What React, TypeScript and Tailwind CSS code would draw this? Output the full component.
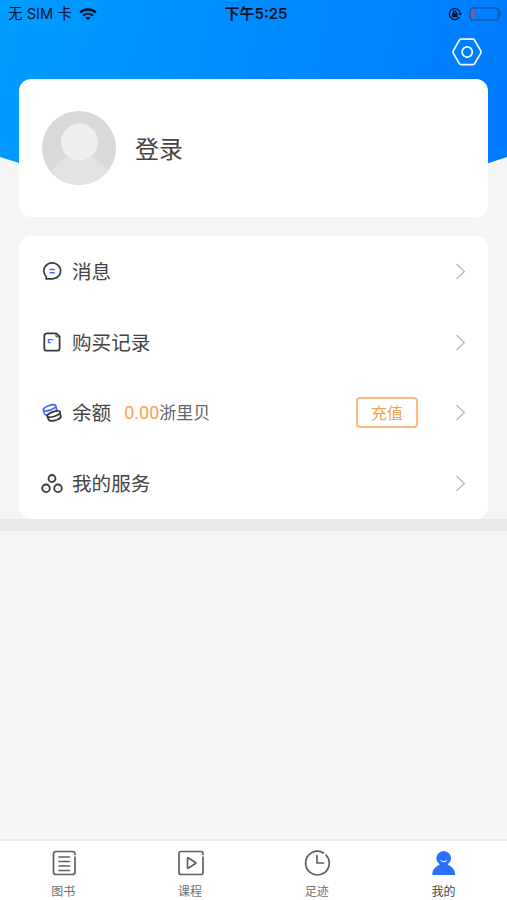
import type { ReactNode } from "react";

function Wifi() {
  return (
    <svg width="18" height="13" viewBox="0 0 18 13" fill="none" stroke="#04152b">
      <path d="M1.2 4.4C5.600.5 12.400.5 16.800 4.400" strokeWidth="2.500" />
      <path d="M4 7.700c2.900-2.600 7.100-2.600 10 0" strokeWidth="2.200" />
      <path d="M9 12.600 6.200 9.800c1.600-1.400 4-1.400 5.600 0z" fill="#04152b" stroke="none" />
    </svg>
  );
}

function RotationLock() {
  return (
    <svg width="15" height="14" viewBox="0 0 15 14" fill="none" stroke="#04152b">
      <path d="M11.500 10A5.500 5.500 0 1 1 12.100 5.500" strokeWidth="1.200" />
      <path d="M10.200 6h4l-1.900 2.700z" fill="#04152b" stroke="none" />
      <rect x="4" y="6.200" width="5.600" height="4" rx=".4" fill="#04152b" stroke="none" />
      <path d="M5.400 6.400V5.200a1.400 1.400 0 0 1 2.800 0v1.200" strokeWidth="1.200" />
    </svg>
  );
}

function Battery() {
  return (
    <svg width="33" height="15" viewBox="0 0 33 15" fill="none">
      <rect x="1" y="1" width="28.500" height="12" rx="3" stroke="#145ba6" strokeWidth="1.400" />
      <rect x="2.400" y="2.500" width="3" height="9" rx="1" fill="#8d5a8e" />
      <path d="M30.500 4.500c2.300 1 2.300 4.500 0 5.500z" fill="#145ba6" />
    </svg>
  );
}

function Settings() {
  return (
    <svg width="30" height="28" viewBox="0 0 30 28" fill="none" stroke="#fff" strokeWidth="1.700">
      <path d="M9.200 1.200h11.600q1.200 0 1.800 1l6 10.400q.7 1.400 0 2.800l-6 10.200q-.6 1-1.800 1H9.200q-1.200 0-1.800-1l-6-10.200q-.7-1.400 0-2.800l6-10.400q.6-1 1.800-1z" strokeLinejoin="round" />
      <circle cx="15.200" cy="14" r="5.100" />
    </svg>
  );
}

function Avatar() {
  return (
    <svg className="size-[74px] rounded-full bg-[#d9d9d9]" viewBox="0 0 74 74">
      <path d="M8 62C16 52 18 48 27 46h21c7 2 12 6 19 15L58 74H18z" fill="#e2e2e2" />
      <circle cx="37.500" cy="31" r="18.500" fill="#efefef" />
    </svg>
  );
}

function MessageIcon() {
  return (
    <svg width="20" height="20" viewBox="0 0 20 20" fill="none" strokeLinecap="round">
      <path d="M4.200 17.900V15.500A8.400 8 0 1 1 10.500 17.900z" stroke="#3b3b40" strokeWidth="1.700" strokeLinejoin="round" />
      <path d="M8.200 8.500h4M8.200 11.700h4" stroke="#4468f5" strokeWidth="1.500" />
    </svg>
  );
}

function RecordIcon() {
  return (
    <svg width="20" height="20" viewBox="0 0 20 20" fill="none">
      <path d="M14.300 1.400H5Q2.300 1.400 2.300 4v12.200q0 2.500 2.700 2.500h10q2.600 0 2.600-2.500V4.500z" stroke="#3b3b40" strokeWidth="1.800" strokeLinejoin="round" />
      <path d="M14 2v2.800h3" stroke="#3b3b40" />
      <path d="M5.800 7.600h5.400M5.800 10.700h3M6.400 7v4.300" stroke="#4468f5" strokeWidth="1.300" />
    </svg>
  );
}

function CoinsIcon() {
  return (
    <svg width="20" height="20" viewBox="0 0 20 20" fill="none" strokeLinejoin="round" strokeWidth="1.700">
      <path d="M1.700 5.500C3.500 3.500 9.500 1.300 12.500 1.800c1.500.3 1.600 1.600.5 2.700C11 6.500 5.300 8.500 2.700 7.900 1.300 7.500.9 6.500 1.700 5.500zM1.300 7l1.300 4c.5 1.100 1.700 1.400 3 1.300M13.800 3.500l1 3.700" stroke="#4468f5" />
      <path d="M5.500 11.800c2-2.100 8.300-4.400 11.400-3.800 1.600.4 1.600 1.700.4 2.900-2.200 2-8.100 3.900-10.700 3.200-1.400-.4-1.900-1.300-1.100-2.300zM5.200 13l1.300 3.500c1.200 2 5.100 1.500 8.500.3 3-1.200 4.200-2.300 3.800-3.900L17.800 9.500" stroke="#34343d" />
    </svg>
  );
}

function ServiceIcon() {
  return (
    <svg width="22" height="20" viewBox="0 0 22 20" fill="none" stroke="#3b3b40" strokeWidth="1.800">
      <circle cx="11" cy="4.500" r="3.500" />
      <circle cx="5" cy="14.300" r="3.800" />
      <circle cx="17" cy="14.300" r="3.800" />
      <path d="M10.400 4.500h1.200M4.400 14.300h1.200M16.400 14.300h1.200" stroke="#aab3dc" strokeWidth="1" />
    </svg>
  );
}

function Row({ icon, label, children }: { icon: ReactNode; label: string; children?: ReactNode }) {
  return (
    <div className="flex items-center pr-[22px] pl-[21px]">
      <span className="flex w-6 shrink-0 justify-center">{icon}</span>
      <span className="ml-2 pt-px text-[19.6px] leading-7">{label}</span>
      <div className="flex flex-1 items-center">{children}</div>
      <svg width="11" height="17" viewBox="0 0 11 17" fill="none" stroke="#b9bcc8" strokeWidth="1.400">
        <path d="m1.500 1 7.800 7.500L1.500 16" />
      </svg>
    </div>
  );
}

function Tab({ label, active, children }: { label: string; active?: boolean; children: ReactNode }) {
  return (
    <div className={`flex flex-col items-center pt-2 text-xs leading-4 ${active ? "text-[#3f3f3f]" : "text-[#707070]"}`}>
      <svg className="ml-px" width="28" height="28" viewBox="0 0 28 28" fill="none" stroke="#606060" strokeWidth="1.700" strokeLinecap="round" strokeLinejoin="round">
        {children}
      </svg>
      <span className="mt-[7px]">{label}</span>
    </div>
  );
}

export default function App() {
  return (
    <div className="relative isolate flex h-[900px] w-full flex-col overflow-hidden bg-[#f5f5f5] font-['Inter','Noto_Sans_CJK_SC',sans-serif] text-[#444]">
      <div className="absolute inset-x-0 top-0 -z-10 h-[170px] bg-linear-[105deg] from-[#009dff] to-[#007aff] [clip-path:polygon(0_0,100%_0,100%_157px,96.4%_163px,90%_170px,10%_170px,3.8%_163px,0_157px)]" />

      <header className="h-[79px] shrink-0 text-[#04152b]">
        <div className="grid h-7 grid-cols-3 items-center pr-[5px] pl-[8px] text-sm leading-5">
          <div className="flex items-center gap-[7px] whitespace-nowrap">
            <span className="text-[14.600px]">无 SIM 卡</span>
            <Wifi />
          </div>
          <span className="pl-[2px] text-center text-[15px] font-semibold">下午5:25</span>
          <div className="flex items-center justify-end gap-[6px]">
            <RotationLock />
            <Battery />
          </div>
        </div>
        <div className="mt-[10px] flex justify-end pr-[25px]">
          <Settings />
        </div>
      </header>

      <section className="mx-[19px] flex h-[138px] shrink-0 items-center rounded-xl bg-white pl-[23px]">
        <Avatar />
        <span className="ml-[19px] pt-[3px] text-2xl">登录</span>
      </section>

      <section className="mx-[19px] mt-[19px] grid h-[283px] shrink-0 grid-rows-4 rounded-xl bg-white">
        <Row icon={<MessageIcon />} label="消息" />
        <Row icon={<RecordIcon />} label="购买记录" />
        <Row icon={<CoinsIcon />} label="余额">
          <span className="ml-[13px] text-[17px] text-[#666]">
            <span className="font-['Roboto'] text-[18px] text-[#ffa04d]">0.00</span>浙里贝
          </span>
          <button className="mr-[37px] ml-auto h-[31px] w-[62px] rounded-[4px] border-2 border-[#ffb880] pt-px text-base leading-none text-[#f7a253]">
            充值
          </button>
        </Row>
        <Row icon={<ServiceIcon />} label="我的服务" />
      </section>
      <div className="h-3 shrink-0 bg-[#e9e9e9]" />

      <nav className="mt-auto grid h-[61px] shrink-0 grid-cols-4 border-t-2 border-[#ebebeb] bg-white">
        <Tab label="图书">
          <path d="M25 5.500V4.800Q25 2.500 22.500 2.500H6Q3.500 2.500 3.500 5v18q0 2.500 2.500 2.500h16.500q2.500 0 2.500-2.500V8" />
          <path d="M9 8h10.500M9 12.500h10.500M9 17h10.500M9 21.500h10.500" />
        </Tab>
        <Tab label="课程">
          <path d="M26 5.500V4.800Q26 2.500 24 2.500H4Q2 2.500 2 4.500v19q0 2 2 2h20q2 0 2-2V8" />
          <path d="M10.500 9.500v9q0 1 1 .5l7-4.500q.8-.5 0-1l-7-4.500q-1-.5-1 .5z" />
        </Tab>
        <Tab label="足迹">
          <path d="M23 6A11.800 11.800 0 1 1 20.500 4" />
          <path d="M14 6.500V14h6.500" />
        </Tab>
        <Tab label="我的" active>
          <path d="M2.300 25.200c.3-4.700 3.200-7.800 7.600-9.700a7.300 7.300 0 1 1 7.600 0c4.400 1.900 7.300 5 7.600 9.700q0 .8-.8.800H3.100q-.8 0-.8-.8z" fill="#2870ff" stroke="none" />
          <path d="M10.900 11.600q2.800 2 5.600 0" stroke="#fff" strokeWidth="1.100" />
        </Tab>
      </nav>
    </div>
  );
}
